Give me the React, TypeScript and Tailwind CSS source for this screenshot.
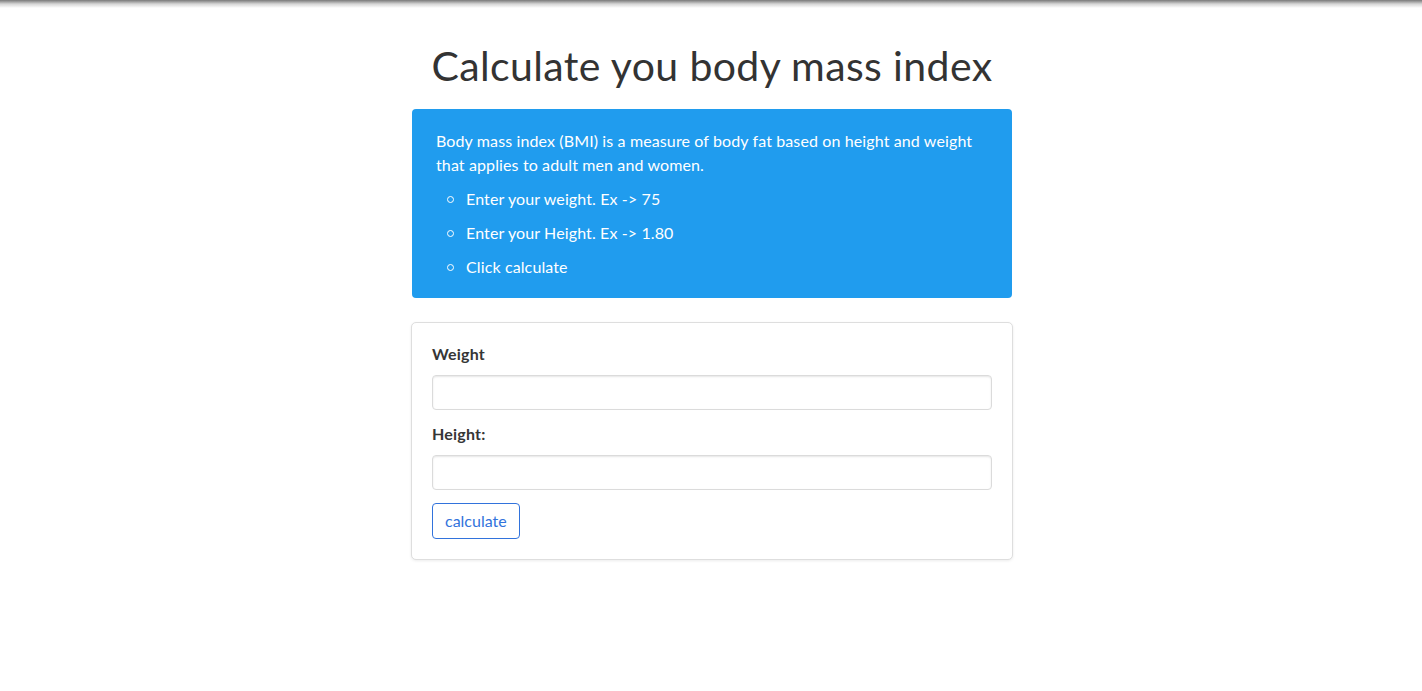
const App = () => {
  return (
    <div className="min-h-screen bg-white font-['Lato','Noto_Sans',sans-serif] text-[#363636]">
      <div className="h-[8px] bg-gradient-to-b from-[#7a7a7a] via-[#d6d6d6] to-white" />

      <div className="flex justify-center pl-[2px]">
        <main className="w-[600px]">
          <h1 className="mt-[34px] text-center text-[41px] tracking-[0.38px] leading-[48px] text-[#333]">
            Calculate you body mass index
          </h1>

          <div className="mt-[19px] rounded-[4px] bg-[#209cee] text-white text-[16px] tracking-[0.12px] pt-[20px] pb-[19px] pl-6 pr-[26px]">
            <p className="leading-6">
              Body mass index (BMI) is a measure of body fat based on height and weight that applies to adult men and women.
            </p>
            <ul className="mt-[10px] flex flex-col gap-[10px]">
              <li className="flex items-center leading-6">
                <span className="ml-[11px] mr-[12px] w-[7px] h-[7px] rounded-full border border-white" />
                Enter your weight. Ex -&gt; 75
              </li>
              <li className="flex items-center leading-6">
                <span className="ml-[11px] mr-[12px] w-[7px] h-[7px] rounded-full border border-white" />
                Enter your Height. Ex -&gt; 1.80
              </li>
              <li className="flex items-center leading-6">
                <span className="ml-[11px] mr-[12px] w-[7px] h-[7px] rounded-full border border-white" />
                Click calculate
              </li>
            </ul>
          </div>

          <div className="mt-[24px] -mx-px rounded-[5px] border border-[#dedede] bg-white shadow-[0_1px_3px_rgba(0,0,0,0.08)] p-[20px] pt-[19px]">
            <label className="block font-bold text-[16px] tracking-[0.2px] leading-6 text-[#363636]">Weight</label>
            <input
              type="text"
              className="mt-[9px] block w-full h-[35px] rounded-[4px] border border-[#dbdbdb] shadow-[inset_0_1px_2px_rgba(10,10,10,0.1)] px-3 outline-none"
            />
            <label className="mt-[12px] block font-bold text-[16px] tracking-[0.2px] leading-6 text-[#363636]">Height:</label>
            <input
              type="text"
              className="mt-[9px] block w-full h-[35px] rounded-[4px] border border-[#dbdbdb] shadow-[inset_0_1px_2px_rgba(10,10,10,0.1)] px-3 outline-none"
            />
            <button className="mt-[13px] h-[36px] px-3 rounded-[4px] border border-[#3273dc] text-[#3273dc] text-[16px] bg-white">
              calculate
            </button>
          </div>
        </main>
      </div>
    </div>
  );
};

export default App;
